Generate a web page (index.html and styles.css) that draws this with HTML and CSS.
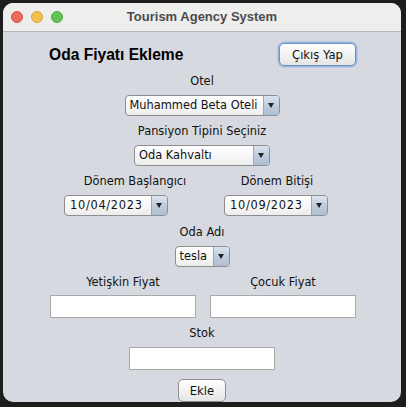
FILE: index.html
```html
<!DOCTYPE html>
<html lang="tr">
<head>
<meta charset="utf-8">
<title>Tourism Agency System</title>
<link rel="stylesheet" href="styles.css">
</head>
<body>
<div class="window">
  <div class="titlebar">
    <div class="lights">
      <span class="light red"></span>
      <span class="light yellow"></span>
      <span class="light green"></span>
    </div>
    <div class="wtitle">Tourism Agency System</div>
    <div></div>
  </div>
  <div class="content">
    <div class="header">
      <h1 class="heading">Oda Fiyatı Ekleme</h1>
      <button class="btn btn-focus">Çıkış Yap</button>
    </div>

    <div class="label label-first">Otel</div>
    <div class="row-center">
      <div class="combo combo-hotel"><span class="combo-text">Muhammed Beta Oteli</span><span class="combo-arrow"></span></div>
    </div>

    <div class="label">Pansiyon Tipini Seçiniz</div>
    <div class="row-center">
      <div class="combo combo-board"><span class="combo-text">Oda Kahvaltı</span><span class="combo-arrow"></span></div>
    </div>

    <div class="date-labels">
      <div class="label dl">Dönem Başlangıcı</div>
      <div class="label dl">Dönem Bitişi</div>
    </div>
    <div class="date-combos">
      <div class="combo combo-date"><span class="combo-text">10/04/2023</span><span class="combo-arrow"></span></div>
      <div class="combo combo-date"><span class="combo-text">10/09/2023</span><span class="combo-arrow"></span></div>
    </div>

    <div class="label label-room">Oda Adı</div>
    <div class="row-center">
      <div class="combo combo-room"><span class="combo-text">tesla</span><span class="combo-arrow"></span></div>
    </div>

    <div class="price-grid">
      <div class="label">Yetişkin Fiyat</div>
      <div class="label">Çocuk Fiyat</div>
      <input class="field" type="text">
      <input class="field" type="text">
    </div>

    <div class="label label-stok">Stok</div>
    <div class="row-center">
      <input class="field" type="text">
    </div>

    <div class="row-center row-ekle">
      <button class="btn btn-ekle">Ekle</button>
    </div>
  </div>
</div>
</body>
</html>
```

FILE: styles.css
```css
* { box-sizing: border-box; }

html, body {
  margin: 0;
  padding: 0;
  background: #1d1d1d;
  width: 406px;
  height: 407px;
  overflow: hidden;
}

.window {
  margin: 3px 0 0 3px;
  width: 398px;
  height: 399px;
  border-radius: 10px;
  overflow: hidden;
  background: #d6d9df;
  font-family: "DejaVu Sans", sans-serif;
  font-size: 11.4px;
  color: #111;
}

.titlebar {
  height: 29px;
  background: #eeeeed;
  border-bottom: 1px solid #b4b6ba;
  display: grid;
  grid-template-columns: 1fr auto 1fr;
  align-items: center;
}

.lights {
  display: flex;
  gap: 8px;
  padding-left: 8px;
}

.light {
  width: 12px;
  height: 12px;
  border-radius: 50%;
}
.red { background: #ed6a5e; border: 0.5px solid #d35449; }
.yellow { background: #f5bf4f; border: 0.5px solid #d8a13c; }
.green { background: #61c554; border: 0.5px solid #4fa841; }

.wtitle {
  font-family: "Liberation Sans", Arial, sans-serif;
  font-weight: bold;
  font-size: 13px;
  color: #4b4b4b;
  padding-bottom: 1px;
}

.content {
  display: flex;
  flex-direction: column;
}

.header {
  margin-top: 11px;
  height: 23px;
  padding: 0 45px 0 46px;
  display: flex;
  align-items: center;
  justify-content: space-between;
}

.heading {
  margin: 0;
  font-family: "Liberation Sans", Arial, sans-serif;
  font-weight: bold;
  font-size: 15.6px;
  color: #000;
  padding-top: 1px;
}

.btn {
  font-family: "DejaVu Sans", sans-serif;
  font-size: 11.6px;
  color: #111;
  border: 1px solid #8d8d8d;
  border-radius: 5px;
  background: linear-gradient(#ffffff, #f3f3f3 50%, #e4e4e4);
  padding: 0;
  height: 22px;
}

.btn-focus {
  width: 77px;
  height: 23px;
  border-color: #6d8fc0;
  box-shadow: 0 0 0 1.5px #9bb9e2;
}

.label {
  height: 14px;
  line-height: 16px;
  text-align: center;
  white-space: nowrap;
}

.label-first { margin-top: 7px; }

.row-center {
  display: flex;
  justify-content: center;
  margin-top: 8px;
  margin-bottom: 7px;
}

.combo {
  height: 21px;
  display: flex;
  border: 1px solid #8e8e8e;
  border-radius: 4px;
  background: linear-gradient(#ffffff, #f6f6f6 60%, #ececec);
  overflow: hidden;
}

.combo-text {
  flex: 1;
  padding-left: 4px;
  line-height: 19px;
  white-space: nowrap;
  overflow: hidden;
}

.combo-arrow {
  flex: 0 0 16px;
  border-left: 1px solid #9ba6b3;
  background: linear-gradient(#dbe4ee, #bccbdc 55%, #aebfd3);
  position: relative;
}
.combo-arrow::after {
  content: "";
  position: absolute;
  left: 4px;
  top: 7px;
  border-left: 3.5px solid transparent;
  border-right: 3.5px solid transparent;
  border-top: 5px solid #222;
}

.combo-hotel { width: 155px; }
.combo-board { width: 136px; }
.combo-date { width: 104px; }
.combo-date .combo-text { letter-spacing: 0.7px; padding-left: 5px; }
.combo-room { width: 55px; }

.date-labels {
  display: flex;
  padding-left: 72px;
  gap: 22px;
}
.dl { width: 120px; }

.date-combos {
  display: flex;
  padding-left: 61px;
  gap: 56px;
  margin-top: 8px;
  margin-bottom: 7px;
}

.label-room { margin-top: 1px; }

.price-grid {
  display: grid;
  grid-template-columns: 146px 146px;
  column-gap: 14px;
  row-gap: 7px;
  padding-left: 47px;
  margin-bottom: 7px;
}

.field {
  width: 146px;
  height: 23px;
  border: 1px solid #a9a9a9;
  background: #ffffff;
  margin: 0;
  padding: 0 3px;
  font-family: "DejaVu Sans", sans-serif;
  font-size: 11.4px;
  outline: none;
}

.label-stok { margin-top: 0; }

.row-ekle {
  margin-top: 2px;
}

.btn-ekle {
  width: 48px;
  height: 23px;
}
```
